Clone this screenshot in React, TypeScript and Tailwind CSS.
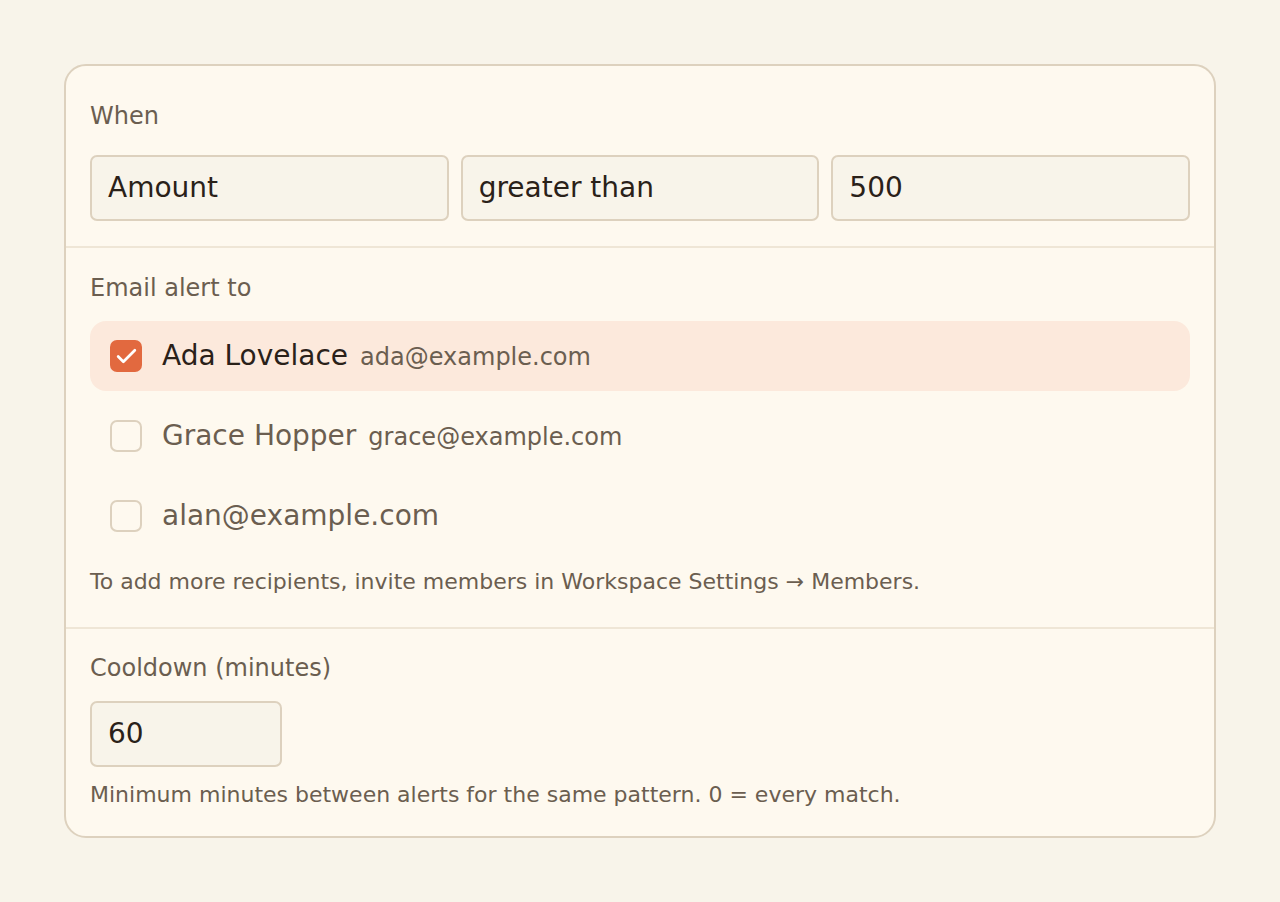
import { Check } from "lucide-react";

type Recipient = {
  name?: string;
  email: string;
  checked: boolean;
};

const recipients: Recipient[] = [
  { name: "Ada Lovelace", email: "ada@example.com", checked: true },
  { name: "Grace Hopper", email: "grace@example.com", checked: false },
  { email: "alan@example.com", checked: false },
];

function Field({ value, className = "" }: { value: string; className?: string }) {
  return (
    <div
      className={`flex h-[66px] items-center rounded-[7px] border-2 border-[#ddd1be] bg-[#f8f4ea] px-4 text-[28px] text-[#2a2119] ${className}`}
    >
      {value}
    </div>
  );
}

function RecipientRow({ recipient }: { recipient: Recipient }) {
  const { name, email, checked } = recipient;
  return (
    <div
      className={`flex h-[70px] items-center gap-5 rounded-[16px] pl-5 ${
        checked ? "bg-[#fce9dc]" : ""
      }`}
    >
      {checked ? (
        <span className="flex h-8 w-8 items-center justify-center rounded-[7px] bg-[#e2693f] text-white">
          <Check className="h-[25px] w-[25px]" strokeWidth={2.6} />
        </span>
      ) : (
        <span className="h-8 w-8 rounded-[7px] border-2 border-[#ddd1be] bg-[#fef9ef]" />
      )}
      <div className="flex items-baseline gap-3">
        {name ? (
          <>
            <span className={`text-[28px] ${checked ? "text-[#2a2119]" : "text-[#6b5e50]"}`}>{name}</span>
            <span className="text-[24px] text-[#6b5e50]">{email}</span>
          </>
        ) : (
          <span className="text-[28px] text-[#6b5e50]">{email}</span>
        )}
      </div>
    </div>
  );
}

export default function App() {
  return (
    <div
      className="min-h-[902px] bg-[#f8f4ea] p-16"
      style={{ fontFamily: '"DejaVu Sans", Verdana, sans-serif' }}
    >
      <div className="overflow-hidden rounded-[22px] border-2 border-[#ddd1be] bg-[#fef9ef]">
        {/* condition */}
        <section className="px-6 pt-[34px] pb-[25px]">
          <p className="text-[24px] leading-8 text-[#6b5e50]">When</p>
          <div className="mt-[23px] grid grid-cols-3 gap-3">
            <Field value="Amount" />
            <Field value="greater than" />
            <Field value="500" />
          </div>
        </section>

        {/* recipients */}
        <section className="border-t-2 border-[#efe6d6] px-6 pt-6 pb-[30px]">
          <p className="text-[24px] leading-8 text-[#6b5e50]">Email alert to</p>
          <div className="mt-[17px] flex flex-col gap-[10px]">
            {recipients.map((r) => (
              <RecipientRow key={r.email} recipient={r} />
            ))}
          </div>
          <p className="mt-4 text-[22px] leading-[30px] text-[#6b5e50]">
            To add more recipients, invite members in Workspace Settings → Members.
          </p>
        </section>

        {/* cooldown */}
        <section className="border-t-2 border-[#efe6d6] px-6 pt-[23px] pb-[26px]">
          <p className="text-[24px] leading-8 text-[#6b5e50]">Cooldown (minutes)</p>
          <Field value="60" className="mt-[17px] w-[192px]" />
          <p className="mt-[13px] text-[22px] leading-[30px] text-[#6b5e50]">
            Minimum minutes between alerts for the same pattern. 0 = every match.
          </p>
        </section>
      </div>
    </div>
  );
}
